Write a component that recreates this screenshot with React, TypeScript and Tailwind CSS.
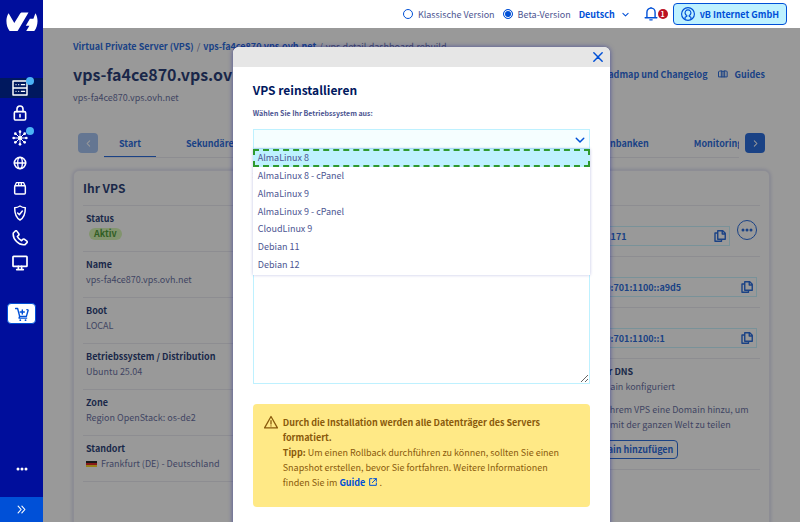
import { useState } from 'react';
import type { ReactNode } from 'react';

type IconProps = { className?: string };

const card = 'rounded-md border border-[#e6e6f5] bg-white px-[9px] shadow-[0_0_4px_rgba(0,14,156,0.25)]';
const link = 'font-semibold text-[#0050d7]';

const systems = [
  'AlmaLinux 8',
  'AlmaLinux 8 - cPanel',
  'AlmaLinux 9',
  'AlmaLinux 9 - cPanel',
  'CloudLinux 9',
  'Debian 11',
  'Debian 12',
];

const tabs = ['Start', 'Sekundärer DNS', 'Automatisches Backup', 'Zusätzlicher Speicher', 'Datenbanken', 'Monitoring'];

const Svg = ({ className = 'size-4', children }: { className?: string; children: ReactNode }) => (
  <svg viewBox="0 0 24 24" fill="none" stroke="currentColor" strokeWidth="2.4" strokeLinecap="round" strokeLinejoin="round" className={className} aria-hidden="true">
    {children}
  </svg>
);

const Logo = () => (
  <svg viewBox="0 0 32 20" fill="currentColor" className="h-5 w-8" aria-hidden="true">
    <path d="M2.6 1.2 8.3 11 13.7 2.2C14.3 1.1 15 .6 16.2.6h6.3L12.1 18.2c-.3.6-.7.9-1.4.9H3.6C.1 14.6-.9 6.6 2.6 1.2Z" />
    <path d="M29.4 1.2c3.5 5.4 2.4 13.4-1.1 17.9h-8.1l3.2-5.4h-3.6l4.1-7h3.5Z" />
  </svg>
);

const ServerIcon = () => (
  <Svg>
    <path d="M1.5 1.5h21v21h-21zM1.5 12h21" strokeWidth="2.2" />
    <path d="M6 7h.1M10 7h.1M14 7h5M6 17h.1M10 17h.1M14 17h5" strokeWidth="1.8" />
  </Svg>
);

const LockIcon = () => (
  <Svg>
    <rect x="3.5" y="10" width="17" height="12.5" rx="2" />
    <path d="M7.5 10V6a4.5 4.5 0 0 1 9 0v4M12 14.5v3.5" />
  </Svg>
);

const NetworkIcon = () => (
  <Svg>
    <path d="M12 3v18M3 12h18M6 6l12 12M18 6 6 18" strokeWidth="1.5" />
    <g fill="currentColor" stroke="none">
      <circle cx="12" cy="12" r="3" />
      <circle cx="12" cy="2.5" r="2" />
      <circle cx="12" cy="21.5" r="2" />
      <circle cx="2.5" cy="12" r="2" />
      <circle cx="21.5" cy="12" r="2" />
      <circle cx="5" cy="5.5" r="2" />
      <circle cx="19" cy="5.5" r="2" />
      <circle cx="5" cy="18.5" r="2" />
      <circle cx="19" cy="18.5" r="2" />
    </g>
  </Svg>
);

const GlobeIcon = () => (
  <Svg>
    <circle cx="12" cy="12" r="8.5" />
    <ellipse cx="12" cy="12" rx="3.5" ry="8.5" strokeWidth="2" />
    <path d="M3.5 12h17" strokeWidth="2" />
  </Svg>
);

const BoxIcon = () => (
  <Svg>
    <rect x="4" y="8.5" width="16" height="12.5" rx="1.5" strokeWidth="2.2" />
    <path d="M4.5 8.5 6.5 4h11l2 4.5M10 4.5v3.5M14 4.5v3.5" strokeWidth="2" />
  </Svg>
);

const ShieldIcon = () => (
  <Svg>
    <path d="M12 1.5c3 2 5 2.5 8 2.7 0 8-1 14.5-8 18.3C5 18.7 4 12.2 4 4.2c3-.2 5-.7 8-2.7Z" strokeWidth="2.2" />
    <path d="m8.5 12 2.5 2.5L15.5 9" strokeWidth="2.2" />
  </Svg>
);

const PhoneIcon = () => (
  <Svg>
    <path d="M2 4.5 5 1.5c.8-.6 1.6-.6 2.2.2l3 4c.5.8.4 1.5-.2 2.1L8 9.7c1.2 2.7 3.6 5 6.3 6.3l1.9-2c.6-.6 1.4-.7 2.1-.2l4 3c.8.6.8 1.5.2 2.2l-3 3C10.5 23.5.5 13.5 2 4.5Z" />
  </Svg>
);

const ScreenIcon = () => (
  <Svg>
    <rect x="1.5" y="2" width="21" height="15" rx="1" strokeWidth="2.6" />
    <path d="M9.5 17v4.5M14.5 17v4.5M7 22h10" strokeWidth="2.4" />
  </Svg>
);

const CartIcon = () => (
  <Svg className="size-[14px]">
    <path d="M1 2.5h3.5L8 16h11.5l3-10.5-2-1M12.5 5v7M9 8.5h7M8 16l-1 3h13" />
    <path d="M9 22.5h.1M18 22.5h.1" strokeWidth="3" />
  </Svg>
);

const Chevron = ({ className }: IconProps) => (
  <Svg className={className}>
    <path d="m3 8 9 9 9-9" strokeWidth="3.5" />
  </Svg>
);

const CopyIcon = () => (
  <Svg className="size-3">
    <path d="M7.5 1.5h10l5 5v12h-15zM16.5 2v6h5.5M7.5 6H2v16.5h13v-3.5" strokeWidth="2.8" />
  </Svg>
);

const DotsIcon = ({ className }: IconProps) => (
  <svg viewBox="0 0 12 4" fill="currentColor" className={className} aria-hidden="true">
    <circle cx="2" cy="2" r="1.5" />
    <circle cx="6" cy="2" r="1.5" />
    <circle cx="10" cy="2" r="1.5" />
  </svg>
);

const navItems = [
  { label: 'Server', icon: <ServerIcon />, active: true, dot: true },
  { label: 'Sicherheit', icon: <LockIcon /> },
  { label: 'Netzwerk', icon: <NetworkIcon />, dot: true },
  { label: 'Domains', icon: <GlobeIcon /> },
  { label: 'Pakete', icon: <BoxIcon /> },
  { label: 'Schutz', icon: <ShieldIcon /> },
  { label: 'Telefonie', icon: <PhoneIcon /> },
  { label: 'Desktop', icon: <ScreenIcon /> },
];

function Sidebar() {
  return (
    <aside className="flex w-[43px] shrink-0 flex-col items-center bg-[#000e9c] text-white">
      <a href="#home" aria-label="Startseite" className="mt-3 mb-[46px]"><Logo /></a>
      <nav className="flex w-full flex-col gap-[5px]">
        {navItems.map(item => (
          <a
            key={item.label}
            href={`#${item.label}`}
            aria-label={item.label}
            className={`flex h-5 items-center justify-center pr-[3px] ${item.active ? 'bg-[#00185e]' : ''}`}
          >
            <span className="relative">
              {item.icon}
              {item.dot && <span className="absolute -top-[3px] -right-[6px] size-2 rounded-full bg-[#4bb2f6]" />}
            </span>
          </a>
        ))}
      </nav>
      <button type="button" aria-label="Bestellen" className="mt-[30px] flex h-[21px] w-[29px] items-center justify-center rounded border border-[#0050d7] bg-white text-[#0050d7]">
        <CartIcon />
      </button>
      <button type="button" aria-label="Mehr" className="mt-auto mb-[26px]"><DotsIcon className="h-1 w-3" /></button>
      <button type="button" aria-label="Menü ausklappen" className="flex h-[25px] w-full items-center justify-center bg-[#0050d7]">
        <Svg className="size-[9px]"><path d="m3 3 8 9-8 9M13 3l8 9-8 9" strokeWidth="3" /></Svg>
      </button>
    </aside>
  );
}

function TopBar() {
  const [version, setVersion] = useState('beta');

  return (
    <header className="flex h-7 shrink-0 items-center justify-end bg-white pr-[13px]">
      {[['classic', 'Klassische Version'], ['beta', 'Beta-Version']].map(([value, label]) => (
        <label key={value} className="mr-2 flex items-center gap-[5px]">
          <input
            type="radio"
            name="version"
            checked={version === value}
            onChange={() => setVersion(value)}
            className="size-[10px] appearance-none rounded-full border border-[#0050d7] bg-white checked:bg-[#0050d7] checked:shadow-[inset_0_0_0_1px_white]"
          />
          {label}
        </label>
      ))}
      <div className="flex items-center gap-[6px]">
        <select aria-label="Sprache" className={`${link} appearance-none bg-transparent`}>
          <option>Deutsch</option>
        </select>
        <Chevron className="size-[7px] text-[#0050d7]" />
      </div>
      <button type="button" aria-label="Benachrichtigungen" className="ml-[15px] flex items-center text-[#0050d7]">
        <Svg className="size-[14px]">
          <path d="M5 18V9a7 7 0 0 1 14 0v9M2 18.5h20M10 22h4M12 .8V2" />
        </Svg>
        <span className="flex size-[10px] items-center justify-center rounded-full bg-[#bb1122] text-[7px] leading-[10px] font-bold text-white">1</span>
      </button>
      <button type="button" className={`${link} ml-[5px] flex h-[22px] items-center gap-[5px] rounded border border-[#0050d7] bg-[#bef1ff] px-[7px]`}>
        <Svg className="size-[14px]">
          <circle cx="12" cy="12" r="11" strokeWidth="2" />
          <path d="M7 20v-2.5l3-1.5v-1.5a5 5 0 1 1 4 0V16l3 1.5V20" strokeWidth="2" />
        </Svg>
        vB Internet GmbH
      </button>
    </header>
  );
}

const Row = ({ title, children }: { title: string; children: ReactNode }) => (
  <div className="border-t border-[#e6e6ee] px-[3px] pt-[5px] pb-[10px]">
    <dt className="font-semibold text-[#00185e]">{title}</dt>
    <dd>{children}</dd>
  </div>
);

const CopyField = ({ value }: { value: string }) => (
  <div className="flex h-5 min-w-0 flex-1 items-center justify-between border border-[#bef1ff] px-[3px]">
    <span className={link}>{value}</span>
    <button type="button" aria-label="Kopieren" className="text-[#0050d7]"><CopyIcon /></button>
  </div>
);

const CardTitle = ({ children }: { children: ReactNode }) => (
  <h2 className="py-2 text-[12px] leading-[18px] font-bold text-[#00185e]">{children}</h2>
);

function Dashboard() {
  return (
    <div className="px-[30px] pt-[11px]">
      <nav className="flex gap-[3px]" aria-label="Brotkrumen">
        <a href="#vps" className={link}>Virtual Private Server (VPS)</a>
        <span>/</span>
        <a href="#service" className={link}>vps-fa4ce870.vps.ovh.net</a>
        <span>/</span>
        <span>vps.detail.dashboard.rebuild</span>
      </nav>
      <div className="mt-[9px] flex items-center justify-between pr-[5px]">
        <h1 className="text-[16px] leading-[22px] font-bold text-[#00185e]">vps-fa4ce870.vps.ovh.net</h1>
        <div className="flex items-center gap-[10px]">
          <a href="#roadmap" className={link}>Roadmap und Changelog</a>
          <a href="#guides" className={`${link} flex items-center gap-[7px]`}>
            <Svg className="size-[10px]">
              <path d="M2 6c3-2 7-2 10 0 3-2 7-2 10 0v13H2zM8 5v14M12 6v13M16 5v14" />
            </Svg>
            Guides
          </a>
        </div>
      </div>
      <p className="mt-[5px]">vps-fa4ce870.vps.ovh.net</p>

      <div className="mt-7 flex items-start px-[5px]">
        <button type="button" aria-label="Zurück" disabled className="flex size-5 shrink-0 items-center justify-center rounded bg-[#95b8f0] text-white">
          <Chevron className="size-[7px] rotate-90" />
        </button>
        <nav className="mx-[6px] flex min-w-0 flex-1 gap-[15px] overflow-hidden border-b border-[#e6e6ee]">
          {tabs.map((tab, i) => (
            <a key={tab} href={`#${tab}`} className={`${link} shrink-0 px-[15px] pt-[3px] pb-[5px] ${i === 0 ? 'border-b border-[#0050d7]' : ''}`}>{tab}</a>
          ))}
        </nav>
        <button type="button" aria-label="Weiter" className="flex size-5 shrink-0 items-center justify-center rounded bg-[#0050d7] text-white">
          <Chevron className="size-[7px] -rotate-90" />
        </button>
      </div>

      <div className="mt-3 grid grid-cols-3 gap-[15px]">
        <section className={card}>
          <CardTitle>Ihr VPS</CardTitle>
          <dl className="border-b border-[#e6e6ee]">
            <Row title="Status"><span className="ml-[3px] inline-block rounded-full bg-[#d0f5a8] px-[5px] leading-3 font-semibold text-[#2f8a12]">Aktiv</span></Row>
            <Row title="Name">vps-fa4ce870.vps.ovh.net</Row>
            <Row title="Boot">LOCAL</Row>
            <Row title="Betriebssystem / Distribution">Ubuntu 25.04</Row>
            <Row title="Zone">Region OpenStack: os-de2</Row>
            <Row title="Standort">
              <span className="flex items-center gap-1 whitespace-nowrap">
                <svg viewBox="0 0 11 6" className="h-[6px] w-[11px]" aria-hidden="true">
                  <path d="M0 0h11v2H0z" fill="#000" />
                  <path d="M0 2h11v2H0z" fill="#d00" />
                  <path d="M0 4h11v2H0z" fill="#fc0" />
                </svg>
                Frankfurt (DE) - Deutschland
              </span>
            </Row>
          </dl>
          <div className="h-20" />
        </section>
        <section className={card}>
          <CardTitle>Ihre Konfiguration</CardTitle>
        </section>
        <section className={card}>
          <CardTitle>IP</CardTitle>
          <dl className="border-b border-[#e6e6ee]">
            <Row title="IPv4">
              <div className="flex items-center gap-[7px]">
                <CopyField value="57.129.41.171" />
                <button type="button" aria-label="Aktionen" className="-mt-3 flex size-5 items-center justify-center rounded-full border border-[#0050d7] text-[#0050d7]">
                  <DotsIcon className="h-1 w-3" />
                </button>
              </div>
            </Row>
            <Row title="IPv6"><CopyField value="2001:41d0:701:1100::a9d5" /></Row>
            <Row title="Gateway"><CopyField value="2001:41d0:701:1100::1" /></Row>
            <Row title="Sekundärer DNS">
              <div className="pl-1 whitespace-nowrap">
                Keine Domain konfiguriert
                <p className="my-2">Fügen Sie Ihrem VPS eine Domain hinzu, um<br />Ihre Daten mit der ganzen Welt zu teilen</p>
              </div>
              <button type="button" className={`${link} flex h-[19px] items-center rounded border border-[#0050d7] px-1`}>Eine Domain hinzufügen</button>
            </Row>
          </dl>
        </section>
      </div>
    </div>
  );
}

function RebuildDialog() {
  const [system, setSystem] = useState(systems[0]);

  return (
    <div role="dialog" aria-labelledby="rebuild-title" className="absolute inset-x-0 top-[19px] -bottom-5 mx-auto w-[calc(50%-1px)] overflow-hidden rounded-md bg-white shadow-[0_0_5px_rgba(0,14,156,0.5)]">
      <div className="flex h-5 items-center justify-end bg-[#e6e6e6] pr-[7px]">
        <button type="button" aria-label="Schließen" className="text-[#0050d7]">
          <Svg className="size-[10px]"><path d="m2 2 20 20M22 2 2 22" strokeWidth="3.5" /></Svg>
        </button>
      </div>
      <form className="px-5 pt-[14px]">
        <h2 id="rebuild-title" className="text-[12px] leading-[18px] font-bold text-[#00185e]">VPS reinstallieren</h2>
        <label htmlFor="system" className="mt-2 block text-[7px] leading-[13px] font-bold">Wählen Sie Ihr Betriebssystem aus:</label>
        <div className="relative mt-[9px]">
          <select id="system" defaultValue="" className="block h-5 w-full appearance-none border border-[#bef1ff] bg-[#f5feff] px-1">
            <option value="" />
          </select>
          <Chevron className="pointer-events-none absolute top-[6px] right-[5px] size-[10px] text-[#0050d7]" />
          <ul role="listbox" aria-label="Betriebssysteme" className="absolute inset-x-0 top-5 z-10 grid h-[126px] auto-rows-fr bg-white pb-[2px] shadow-[0_0_3px_rgba(0,14,156,0.25)]">
            {systems.map(name => (
              <li
                key={name}
                role="option"
                aria-selected={name === system}
                onClick={() => setSystem(name)}
                className={`flex items-center border-2 border-dashed px-[3px] ${name === system ? 'border-[#2f9a2f] bg-[#bef1ff]' : 'border-transparent'}`}
              >
                {name}
              </li>
            ))}
          </ul>
        </div>
        <label htmlFor="ssh-key" className="mt-5 block text-[7px] leading-[13px] font-bold">SSH-Schlüssel</label>
        <textarea id="ssh-key" className="mt-[9px] block h-[193px] w-full resize-y border border-[#bef1ff] bg-white" />
        <div role="alert" className="mt-5 flex gap-[5px] rounded bg-[#ffe986] pt-[11px] pr-5 pb-[17px] pl-[11px] text-[#8a5a0c]">
          <Svg className="size-[14px] shrink-0">
            <path d="M12 2.5 23 22H1zM12 9.5v6M12 18.6v.2" strokeWidth="2.2" />
          </Svg>
          <p>
            <strong>Durch die Installation werden alle Datenträger des Servers formatiert.</strong><br />
            <strong>Tipp:</strong> Um einen Rollback durchführen zu können, sollten Sie einen Snapshot erstellen, bevor Sie fortfahren. Weitere Informationen finden Sie im{' '}
            <a href="#guide" className={link}>
              Guide
              <Svg className="ml-1 inline size-2 align-baseline"><path d="M9 2H2v20h20v-7M14 2h8v8M22 2 10 14" strokeWidth="3" /></Svg>
            </a>{' '}.
          </p>
        </div>
      </form>
    </div>
  );
}

export default function App() {
  return (
    <div className="flex h-screen overflow-hidden bg-white font-['Noto_Sans_CJK_SC',sans-serif] text-[9px] leading-[15px] text-[#4d5592]">
      <Sidebar />
      <div className="flex min-w-0 flex-1 flex-col">
        <TopBar />
        <main className="relative min-h-0 flex-1 overflow-hidden">
          <Dashboard />
          <div className="absolute inset-0 bg-[#333333]/50" />
          <RebuildDialog />
        </main>
      </div>
    </div>
  );
}
